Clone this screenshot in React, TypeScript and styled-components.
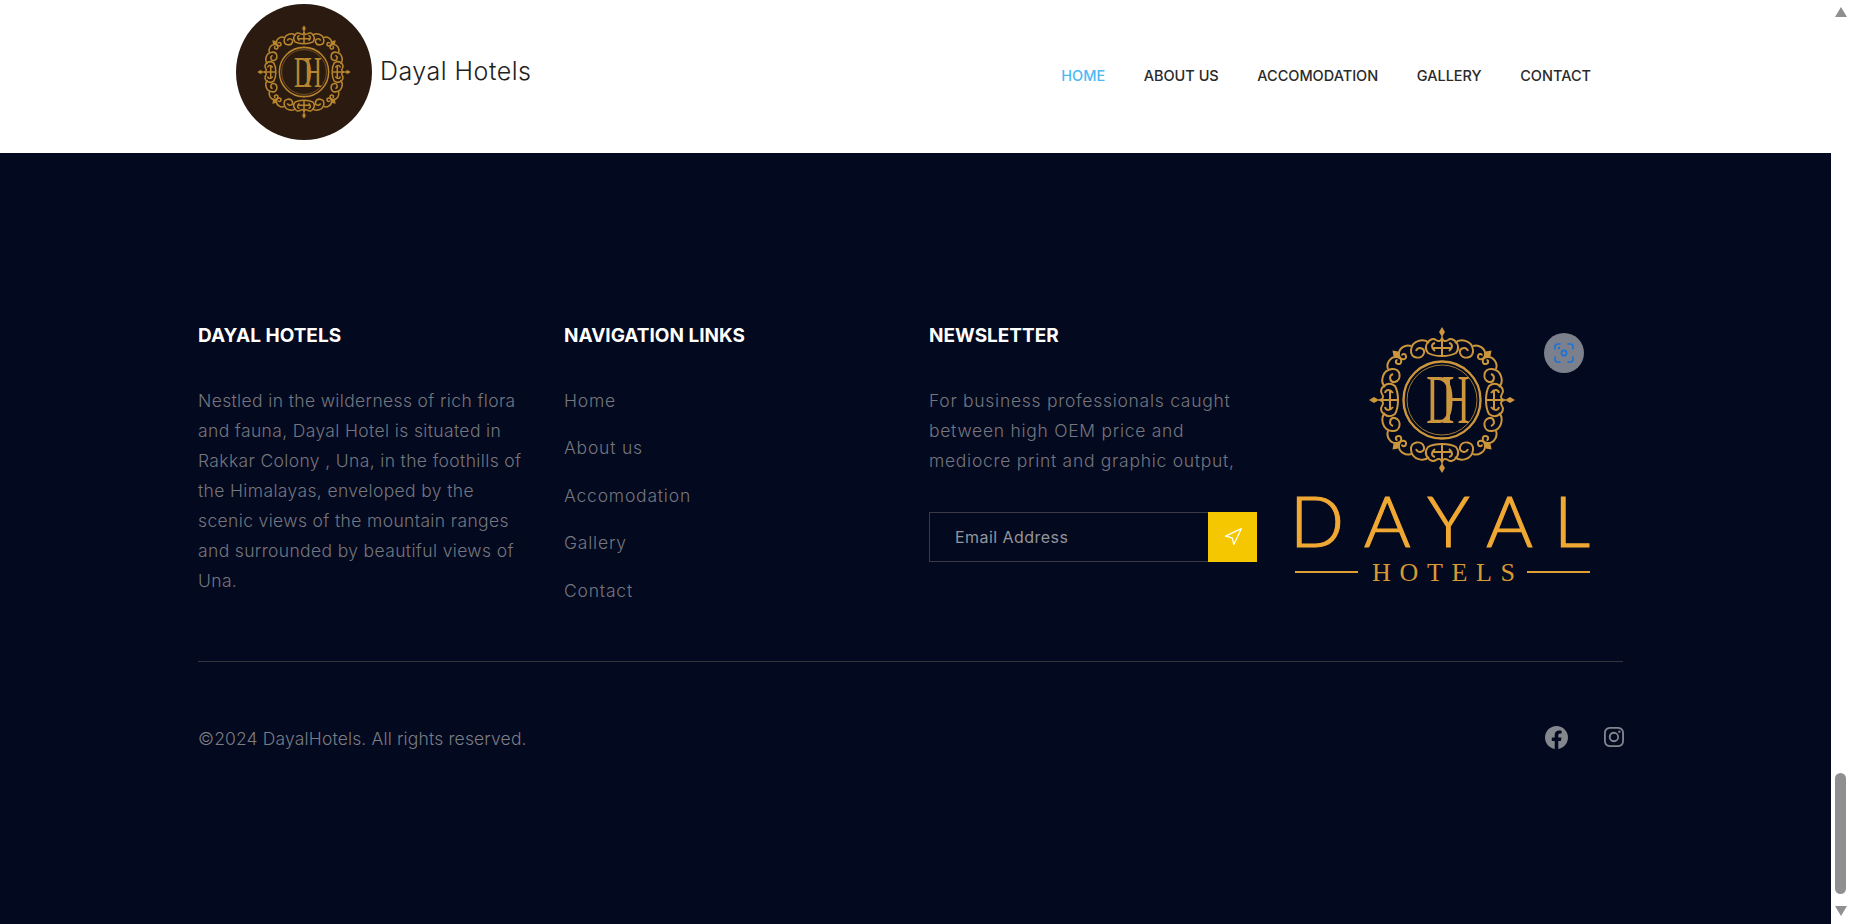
import React from 'react';
import styled, { createGlobalStyle } from 'styled-components';
import { Navigation } from 'lucide-react';
import { BsFacebook, BsInstagram } from 'react-icons/bs';

const GlobalStyle = createGlobalStyle`
  html, body {
    margin: 0;
    height: 100%;
    overflow: hidden;
    background: #fff;
  }
  * { box-sizing: border-box; }
`;

const navLinks = ['HOME', 'ABOUT US', 'ACCOMODATION', 'GALLERY', 'CONTACT'];
const footerLinks = ['Home', 'About us', 'Accomodation', 'Gallery', 'Contact'];
const about = [
  'Nestled in the wilderness of rich flora',
  'and fauna, Dayal Hotel is situated in',
  'Rakkar Colony , Una, in the foothills of',
  'the Himalayas, enveloped by the',
  'scenic views of the mountain ranges',
  'and surrounded by beautiful views of',
  'Una.',
];
const news = [
  'For business professionals caught',
  'between high OEM price and',
  'mediocre print and graphic output,',
];

// one quarter of the emblem ornament, centred on 0,0
const Quarter = () => (
  <g>
    <path d="M0,-73 L3,-68 L0,-63 L-3,-68Z" fill="currentColor" stroke="none" />
    <path d="M-14,-47 C-20,-55 -11,-64 -6,-60 C-3,-58 -1,-59 0,-62 C1,-59 3,-58 6,-60 C11,-64 20,-55 14,-47 C7,-43 -7,-43 -14,-47Z" />
    <path d="M0,-60 V-45 M-9,-52 H9" />
    <path d="M-7,-49 C-11,-52 -11,-56 -7,-57 M7,-49 C11,-52 11,-56 7,-57" />
    {[1, -1].map(s => (
      <g key={s} transform={`scale(${s},1)`}>
        <path d="M13,-57 C18,-62 30,-60 31,-50 C32,-41 20,-40 18,-47 C17,-52 24,-54 26,-49" />
        <path d="M31,-54 C36,-56 44,-52 43,-45 C42,-39 35,-40 36,-44 C36.5,-47 40,-46.5 40,-44.5" />
      </g>
    ))}
    <g transform="rotate(45)">
      <path d="M0,-70 L3.5,-65 L0,-59 L-3.5,-65Z" fill="currentColor" stroke="none" />
    </g>
  </g>
);

const Emblem = () => (
  <>
    {[0, 90, 180, 270].map(a => (
      <g key={a} transform={`rotate(${a})`}>
        <Quarter />
      </g>
    ))}
    <circle r="38.5" strokeWidth="2.4" />
    <circle r="35" strokeWidth="0.8" />
    <g transform="scale(0.55,1)">
      <MonoText x="0" y="23" textAnchor="middle" fontSize="70" letterSpacing="-22">DH</MonoText>
    </g>
  </>
);

const App = () => (
  <>
    <GlobalStyle />
    <Page>
      <Main>
        <Header>
          <Brand>
            <BrandMark viewBox="0 0 136 136">
              <circle cx="68" cy="68" r="68" fill="#2a1a10" stroke="none" />
              <g transform="translate(68,68) scale(0.64)">
                <Emblem />
              </g>
            </BrandMark>
            <BrandName>Dayal Hotels</BrandName>
          </Brand>
          <Nav>
            {navLinks.map((link, i) => (
              <NavLink key={link} $active={i === 0}>{link}</NavLink>
            ))}
          </Nav>
        </Header>

        <Footer>
          <Columns>
            <Column>
              <Heading>DAYAL HOTELS</Heading>
              <Body $spacing={0.36}>{about.map(l => <BodyLine key={l}>{l}</BodyLine>)}</Body>
            </Column>
            <Column>
              <Heading>NAVIGATION LINKS</Heading>
              <LinkList>
                {footerLinks.map(l => <LinkItem key={l}>{l}</LinkItem>)}
              </LinkList>
            </Column>
            <Column>
              <Heading>NEWSLETTER</Heading>
              <Body $spacing={0.72}>{news.map(l => <BodyLine key={l}>{l}</BodyLine>)}</Body>
              <Subscribe>
                <EmailInput placeholder="Email Address" />
                <SendButton aria-label="Send">
                  <Navigation size={20} strokeWidth={1.5} />
                </SendButton>
              </Subscribe>
            </Column>
            <LogoColumn>
              <FooterLogo viewBox="0 0 295 255">
                <g transform="translate(147,73)">
                  <Emblem />
                </g>
                <WordMark x="-5" y="220" fontSize="71" textLength="300" lengthAdjust="spacing">DAYAL</WordMark>
                <path d="M0,245 H63 M232,245 H295" strokeWidth="2" stroke="#e0a033" />
                <SubMark x="77" y="254" fontSize="26" textLength="143" lengthAdjust="spacing">HOTELS</SubMark>
              </FooterLogo>
              <ScreenshotBadge>
                <svg width="22" height="22" viewBox="0 0 22 22" fill="none" stroke="#1a73d6" strokeWidth="1.6" strokeLinecap="round">
                  <path d="M2,7 V4.5 A2.5,2.5 0 0 1 4.5,2 H7 M15,2 H17.5 A2.5,2.5 0 0 1 20,4.5 V7 M20,15 V17.5 A2.5,2.5 0 0 1 17.5,20 H15 M7,20 H4.5 A2.5,2.5 0 0 1 2,17.5 V15" />
                  <circle cx="11" cy="11" r="2.6" />
                  <circle cx="6" cy="6" r="0.5" />
                </svg>
              </ScreenshotBadge>
            </LogoColumn>
          </Columns>
          <Bottom>
            <Copyright>©2024 DayalHotels. All rights reserved.</Copyright>
            <Socials>
              <BsFacebook size={23} />
              <BsInstagram size={20} />
            </Socials>
          </Bottom>
        </Footer>
      </Main>

      <ScrollRail>
        <Arrow $up />
        <Track><Thumb /></Track>
        <Arrow />
      </ScrollRail>
    </Page>
  </>
);

export default App;

const Page = styled.div`
  display: flex;
  height: 924px;
  width: 1850px;
  overflow: hidden;
`;

const Main = styled.div`
  flex: 1;
  min-width: 0;
  display: flex;
  flex-direction: column;
  font-family: Inter, "Liberation Sans", sans-serif;
`;

const Header = styled.header`
  height: 153px;
  flex: none;
  background: #fff;
  display: flex;
  align-items: center;
  justify-content: space-between;
  padding: 0 240px 0 236px;
`;

const Brand = styled.div`
  display: flex;
  align-items: center;
  gap: 8px;
  margin-top: -9px;
`;

const BrandMark = styled.svg`
  width: 136px;
  height: 136px;
  color: #b8862e;
  fill: none;
  stroke: currentColor;
  stroke-width: 2.4;
`;

const BrandName = styled.div`
  font-size: 25px;
  font-weight: 300;
  color: #222;
  margin-top: -3px;
  letter-spacing: 0.5px;
`;

const Nav = styled.nav`
  display: flex;
  gap: 38.5px;
  margin-top: -2px;
`;

const NavLink = styled.a<{ $active?: boolean }>`
  font-size: 14.5px;
  font-weight: 500;
  color: ${p => (p.$active ? '#4db8f5' : '#2a2a2a')};
  line-height: 20px;
`;

const Footer = styled.footer`
  flex: 1;
  background: #03091e;
  padding: 170px 208px 0 198px;
`;

const Columns = styled.div`
  display: grid;
  grid-template-columns: 366px 365px 366px 1fr;
  padding-bottom: 55px;
  border-bottom: 1px solid #33343c;
`;

const Column = styled.div`
  min-width: 0;
`;

const Heading = styled.h4`
  margin: 1px 0 38px;
  font-size: 19px;
  font-weight: 700;
  line-height: 24px;
  color: #fff;
`;

const Body = styled.div<{ $spacing: number }>`
  font-size: 17.5px;
  font-weight: 300;
  line-height: 30px;
  letter-spacing: ${p => p.$spacing}px;
  color: #75767e;
`;

const BodyLine = styled.div`
  white-space: nowrap;
`;

const LinkList = styled.ul`
  list-style: none;
  margin: 0;
  padding: 0;
  display: flex;
  flex-direction: column;
  gap: 17.4px;
`;

const LinkItem = styled.li`
  font-size: 17.5px;
  font-weight: 300;
  line-height: 30px;
  letter-spacing: 0.8px;
  color: #75767e;
`;

const Subscribe = styled.div`
  display: flex;
  width: 328px;
  height: 50px;
  margin-top: 36px;
`;

const EmailInput = styled.input`
  flex: 1;
  min-width: 0;
  background: transparent;
  border: 1px solid #3a3b42;
  border-right: none;
  padding: 0 0 0 25px;
  font-family: inherit;
  font-size: 16px;
  letter-spacing: 0.45px;
  color: #999;
  outline: none;
  &::placeholder {
    color: #94959c;
    opacity: 1;
  }
`;

const SendButton = styled.button`
  width: 49px;
  flex: none;
  border: none;
  padding: 0;
  background: #f5c700;
  color: #fff;
  display: flex;
  align-items: center;
  justify-content: center;
`;

const LogoColumn = styled.div`
  position: relative;
  margin-top: 4px;
`;

const FooterLogo = styled.svg`
  display: block;
  width: 295px;
  height: 255px;
  color: #cc973c;
  fill: none;
  stroke: currentColor;
  stroke-width: 2;
  overflow: visible;
`;

const MonoText = styled.text`
  font-family: "Liberation Serif", serif;
  fill: currentColor;
  stroke: none;
`;

const WordMark = styled.text`
  font-family: Lato, sans-serif;
  font-weight: 300;
  fill: #f0a833;
  stroke: #f0a833;
  stroke-width: 1.2;
`;

const SubMark = styled.text`
  font-family: "Liberation Serif", serif;
  fill: #d89a34;
  stroke: none;
`;

const ScreenshotBadge = styled.div`
  position: absolute;
  left: 249px;
  top: 6px;
  width: 40px;
  height: 40px;
  border-radius: 50%;
  background: #7c808c;
  display: flex;
  align-items: center;
  justify-content: center;
`;

const Bottom = styled.div`
  display: flex;
  align-items: center;
  justify-content: space-between;
  padding-top: 62px;
`;

const Copyright = styled.div`
  font-size: 17.5px;
  font-weight: 300;
  line-height: 30px;
  letter-spacing: 0.15px;
  color: #7b7c84;
`;

const Socials = styled.div`
  display: flex;
  align-items: center;
  gap: 36px;
  margin: -3px -1px 0 0;
  color: #85878f;
`;

const ScrollRail = styled.div`
  width: 19px;
  flex: none;
  background: #fff;
  display: flex;
  flex-direction: column;
  padding: 3px 0 4px;
`;

const Track = styled.div`
  flex: 1;
  display: flex;
  flex-direction: column;
  justify-content: flex-end;
  padding: 0 4px 8px;
`;

const Thumb = styled.div`
  height: 121px;
  border-radius: 6px;
  background: #8f8f8f;
`;

const Arrow = styled.div<{ $up?: boolean }>`
  height: 18px;
  flex: none;
  display: flex;
  align-items: center;
  justify-content: center;
  &::before {
    content: '';
    border-left: 6.5px solid transparent;
    border-right: 6.5px solid transparent;
    ${p => (p.$up ? 'border-bottom: 10px solid #8f8f8f;' : 'border-top: 10px solid #8f8f8f;')}
  }
`;
